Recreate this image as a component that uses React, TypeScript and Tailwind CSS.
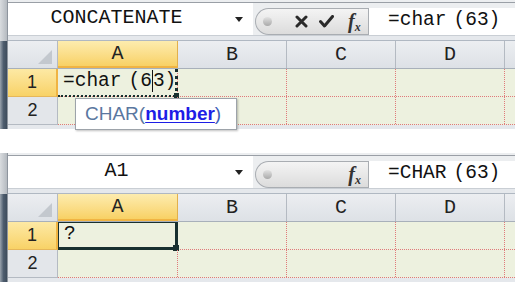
import React from "react";

// Two Excel 2010 style snippets: editing =char(63) in A1, then the result "?"

const MONO = "font-['Liberation_Mono',monospace]";

function FxIcon() {
  return (
    <span className="font-['Liberation_Serif',serif] italic font-bold text-[20px] leading-none text-[#333]">
      f<span className="text-[12px] align-[-3px]">x</span>
    </span>
  );
}

function CancelIcon() {
  return (
    <svg width="13" height="13" viewBox="0 0 13 13">
      <path d="M2 2 L11 11 M11 2 L2 11" stroke="#2a2a2a" strokeWidth="3" strokeLinecap="round" fill="none" />
    </svg>
  );
}

function EnterIcon() {
  return (
    <svg width="15" height="13" viewBox="0 0 15 13">
      <path d="M1.5 6.5 L5.5 11 L13.5 1.5" stroke="#2a2a2a" strokeWidth="3" strokeLinecap="round" strokeLinejoin="round" fill="none" />
    </svg>
  );
}

function FormulaBar({ name, formula, buttons }: { name: string; formula: React.ReactNode; buttons: boolean }) {
  return (
    <div className="flex flex-col">
      <div className="h-[3px] border-b border-[#9a9fa6] bg-[#eceef0]" />
      <div className="flex h-[32px] bg-[#eceef0]">
        {/* name box */}
        <div className="flex w-[245px] bg-white">
          <div className={`flex flex-1 items-center justify-center pb-[2px] text-[20px] text-[#111] ${MONO}`}>{name}</div>
          <div className="flex w-[28px] items-center justify-center">
            <div className="h-0 w-0 border-x-[4px] border-t-[5px] border-x-transparent border-t-[#222]" />
          </div>
        </div>
        {/* pill with buttons */}
        <div className="ml-[2px] flex w-[113px] pt-[5px]">
          <div className="flex h-[27px] flex-1 items-center rounded-l-full border border-r-0 border-[#a9adb2] bg-gradient-to-b from-[#f4f4f4] to-[#dcdcdc] pl-[7px] pr-[7px]">
            <div className="h-[9px] w-[9px] rounded-full bg-gradient-to-b from-[#e2e2e2] to-[#a9a9a9]" />
            {buttons ? (
              <div className="ml-[23px] flex items-center">
                <CancelIcon />
                <span className="ml-[11px]">
                  <EnterIcon />
                </span>
                <span className="ml-[14px]">
                  <FxIcon />
                </span>
              </div>
            ) : (
              <div className="ml-auto">
                <FxIcon />
              </div>
            )}
          </div>
        </div>
        {/* formula input */}
        <div className="mt-[5px] flex flex-1 items-center border-l border-[#a9adb2] bg-white pl-[19px] pb-[2px]">
          <span className={`text-[19.5px] text-[#111] ${MONO}`}>{formula}</span>
        </div>
      </div>
      <div className="h-[6px] border-t border-[#c9ced4] border-b border-b-[#b0b8c2] bg-[#e5e8ec]" />
    </div>
  );
}

function ColHeaders() {
  return (
    <div className={`flex h-[28px] border-b border-[#a8b0ba] bg-gradient-to-b from-[#eceef1] to-[#dde1e6] text-[20px] text-[#222] ${MONO}`}>
      <div className="relative w-[50px] border-r border-[#b4bac2]">
        <div className="absolute bottom-[4px] right-[5px] h-0 w-0 border-b-[14px] border-l-[14px] border-b-[#c3c8ce] border-l-transparent" />
      </div>
      <div className="flex w-[120px] items-center justify-center border-r border-b-2 border-r-[#e2b04c] border-b-[#f0b443] bg-gradient-to-b from-[#fdecae] to-[#f8d164]">A</div>
      <div className="flex w-[109px] items-center justify-center border-r border-[#b4bac2]">B</div>
      <div className="flex w-[109px] items-center justify-center border-r border-[#b4bac2]">C</div>
      <div className="flex w-[109px] items-center justify-center border-r border-[#b4bac2]">D</div>
      <div className="flex-1" />
    </div>
  );
}

function Row({ num, active, first }: { num: string; active: boolean; first: React.ReactNode }) {
  return (
    <div className="flex h-[28px]">
      <div
        className={
          active
            ? "flex w-[50px] items-center justify-center border-r-2 border-b border-r-[#f0b443] border-b-[#e6b75a] bg-gradient-to-b from-[#fde9a4] to-[#f8d266] text-[18px] text-[#222] font-['Liberation_Sans',sans-serif]"
            : "flex w-[50px] items-center justify-center border-r border-b border-[#b4bac2] bg-[#e3e6ea] text-[18px] text-[#222] font-['Liberation_Sans',sans-serif]"
        }
      >
        {num}
      </div>
      <div className="flex flex-1 border-b border-dotted border-[#e07a7a] bg-[#edf1df]">
        <div className="relative w-[120px] border-r border-dotted border-[#e07a7a]">{first}</div>
        <div className="w-[109px] border-r border-dotted border-[#e07a7a]" />
        <div className="w-[109px] border-r border-dotted border-[#e07a7a]" />
        <div className="w-[109px] border-r border-dotted border-[#e07a7a]" />
        <div className="flex-1" />
      </div>
    </div>
  );
}

function Panel({ children, rows }: { children: React.ReactNode; rows: React.ReactNode }) {
  return (
    <div className="relative flex h-[129px] overflow-hidden">
      <div className="flex w-[8px] flex-col border-r border-[#8e959e]">
        <div className="h-[41px] bg-gradient-to-r from-[#d9dcdf] to-[#b5bac0]" />
        <div className="flex-1 bg-gradient-to-r from-[#9aa3ad] via-[#4e5d6e] to-[#3e4c5c]" />
      </div>
      <div className="flex flex-1 flex-col bg-[#e5e8ec]">
        {children}
        {rows}
      </div>
    </div>
  );
}

export default function App() {
  return (
    <div className="relative h-[288px] w-[515px] overflow-hidden bg-white">
      {/* editing */}
      <Panel
        rows={
          <>
            <ColHeaders />
            <Row
              num="1"
              active
              first={
                <div className="absolute inset-0 -bottom-px -right-px flex items-center border-b-[2px] border-r-[3px] border-dotted border-[#18302f] pl-[5px]">
                  <span className={`text-[19.5px] text-[#111] ${MONO}`}>
                    =char<span className="ml-[7px]">(6</span>
                    <span className="border-l border-[#111]">3)</span>
                  </span>
                  <div className="absolute -bottom-[3px] -right-[4px] h-[5px] w-[5px] bg-[#18302f]" />
                </div>
              }
            />
            <Row num="2" active={false} first={null} />
          </>
        }
      >
        <FormulaBar
          name="CONCATENATE"
          buttons
          formula={
            <>
              =char<span className="ml-[7px]">(63)</span>
            </>
          }
        />
      </Panel>

      {/* tooltip over the top panel */}
      <div className="pointer-events-none absolute left-[75px] top-[98px] flex h-[32px] w-[162px] items-center border border-[#9da3aa] bg-white pl-[9px] text-[19px] shadow-[1px_1px_2px_rgba(0,0,0,0.25)] font-['Liberation_Sans',sans-serif]">
        <span className="text-[#5a77a0]">CHAR(</span>
        <span className="font-bold text-[#1d1de6] underline underline-offset-2">number</span>
        <span className="text-[#3f5fb8]">)</span>
      </div>

      <div className="h-[24px]" />

      {/* result */}
      <Panel
        rows={
          <>
            <ColHeaders />
            <Row
              num="1"
              active
              first={
                <div className="absolute inset-0 -bottom-px -right-px flex items-center border-l border-t border-b-[3px] border-r-[3px] border-[#18302f] border-b-dotted pl-[5px]">
                  <span className={`text-[19.5px] text-[#111] ${MONO}`}>?</span>
                  <div className="absolute -bottom-[4px] -right-[4px] h-[6px] w-[6px] bg-[#18302f]" />
                </div>
              }
            />
            <Row num="2" active={false} first={null} />
          </>
        }
      >
        <FormulaBar
          name="A1"
          buttons={false}
          formula={
            <>
              =CHAR<span className="ml-[7px]">(63)</span>
            </>
          }
        />
      </Panel>
    </div>
  );
}
